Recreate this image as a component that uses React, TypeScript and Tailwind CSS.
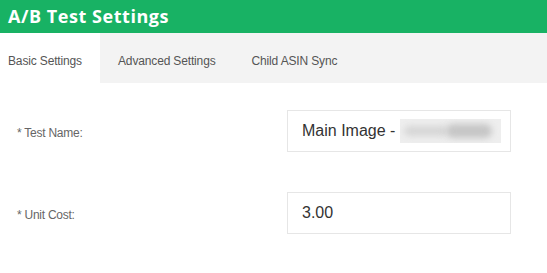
export default function App() {
  return (
    <div className="w-[547px] h-[273px] overflow-hidden bg-white font-['Liberation_Sans',Arial,sans-serif]">
      <div className="h-[33px] bg-[#18b264] pl-2 flex items-center">
        <h1 className="text-[18px] font-bold text-white font-['Open_Sans',sans-serif] tracking-[0.55px]">
          A/B Test Settings
        </h1>
      </div>

      <div className="flex h-[50px] bg-[#f3f3f3] text-[12px] tracking-[-0.15px] text-[#555]">
        <div className="w-[100px] bg-white flex items-center pl-2 pt-[6px]">Basic Settings</div>
        <div className="flex items-center pl-[18px] pt-[6px]">Advanced Settings</div>
        <div className="flex items-center pl-[36px] pt-[6px]">Child ASIN Sync</div>
      </div>

      <div className="pt-[27px]">
        <div className="flex items-center h-[42px]">
          <label className="w-[287px] pl-[17px] pt-[4px] text-[12px] tracking-[-0.25px] text-[#666]">* Test Name:</label>
          <div className="w-[224px] h-[42px] border border-[#e6e6e6] flex items-center pl-[14px] text-[16px] text-[#333] overflow-hidden">
            <span>Main Image -&nbsp;</span>
            <div className="relative w-[101px] h-[24px] bg-[#eeeeee] overflow-hidden">
              <div className="absolute left-[4px] top-[7px] w-[44px] h-[10px] rounded-full bg-[#d6d6d6] blur-[3px]" />
              <div className="absolute left-[46px] top-[5px] w-[46px] h-[14px] rounded-full bg-[#c6c6c6] blur-[3px]" />
            </div>
          </div>
        </div>

        <div className="flex items-center h-[42px] mt-[40px]">
          <label className="w-[287px] pl-[17px] pt-[4px] text-[12px] tracking-[-0.25px] text-[#666]">* Unit Cost:</label>
          <div className="w-[224px] h-[42px] border border-[#e6e6e6] flex items-center pl-[14px] text-[16px] text-[#333]">
            3.00
          </div>
        </div>
      </div>
    </div>
  );
}
